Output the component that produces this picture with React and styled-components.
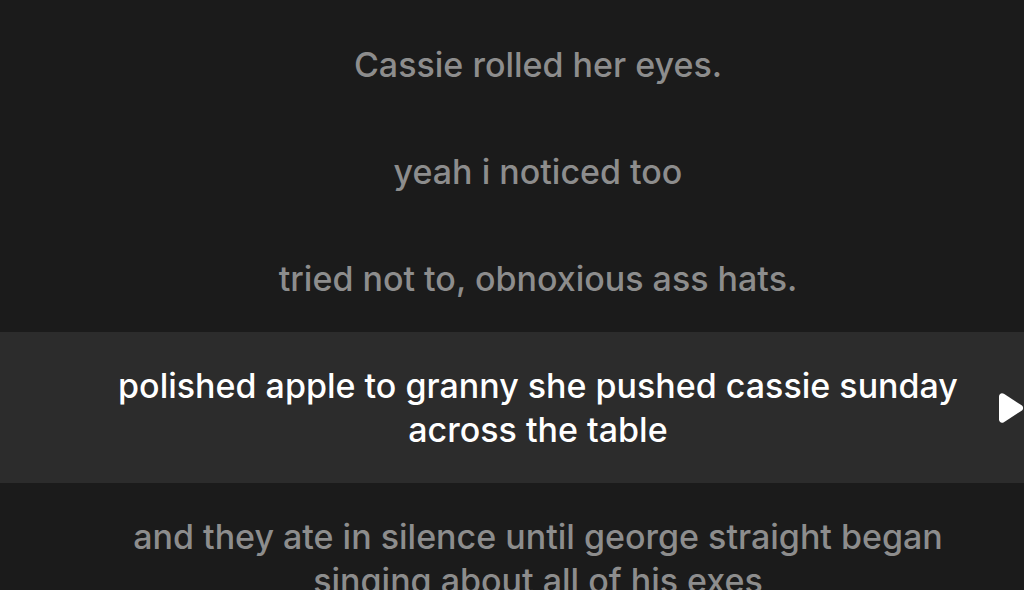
import React from 'react';
import styled, { createGlobalStyle } from 'styled-components';

const lines = [
  { text: 'Cassie rolled her eyes.' },
  { text: 'yeah i noticed too' },
  { text: 'tried not to, obnoxious ass hats.' },
  { text: 'polished apple to granny she pushed cassie sunday across the table', active: true },
  { text: 'and they ate in silence until george straight began singing about all of his exes' },
];

const GlobalStyle = createGlobalStyle`
  html, body {
    margin: 0;
    padding: 0;
    background: #1b1b1b;
    overflow: hidden;
  }
`;

const Page = styled.div`
  width: 1024px;
  height: 590px;
  overflow: hidden;
  background: #1b1b1b;
  padding-top: 11px;
  box-sizing: border-box;
  font-family: Inter, 'Open Sans', sans-serif;
`;

const Row = styled.div`
  display: flex;
  align-items: center;
  width: 1100px;
  padding: 32px 0 31px 103px;
  box-sizing: border-box;
  background: ${p => (p.$active ? '#2c2c2c' : 'transparent')};
`;

const Text = styled.div`
  width: 870px;
  flex-shrink: 0;
  text-align: center;
  font-size: 34px;
  line-height: 44px;
  font-weight: 500;
  color: ${p => (p.$active ? '#ffffff' : '#8d8d8d')};
`;

const PlayWrap = styled.div`
  margin-left: 23px;
  width: 28px;
  height: 32px;
  display: flex;
  align-items: center;
`;

const Play = () => (
  <svg width="28" height="32" viewBox="0 0 28 32">
    <path
      d="M3 4.5 C3 1.8 5.6 0.4 7.9 1.8 L25.6 13.3 C27.6 14.6 27.6 17.4 25.6 18.7 L7.9 30.2 C5.6 31.6 3 30.2 3 27.5 Z"
      fill="#ffffff"
    />
  </svg>
);

export default function App() {
  return (
    <>
      <GlobalStyle />
      <Page>
        {lines.map((l, i) => (
          <Row key={i} $active={l.active}>
            <Text $active={l.active}>{l.text}</Text>
            {l.active && (
              <PlayWrap>
                <Play />
              </PlayWrap>
            )}
          </Row>
        ))}
      </Page>
    </>
  );
}
